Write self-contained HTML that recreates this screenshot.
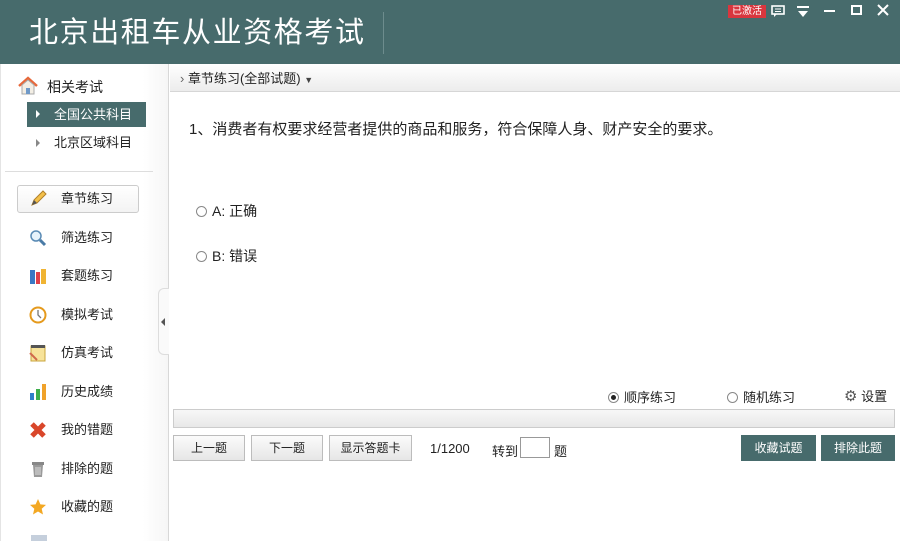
<!DOCTYPE html>
<html><head><meta charset="utf-8"><style>
*{margin:0;padding:0;box-sizing:border-box}
body{width:900px;height:541px;overflow:hidden;background:#fff;font-family:"Liberation Sans","Noto Sans CJK SC",sans-serif;position:relative;color:#222}
.hdr{position:absolute;left:0;top:0;width:900px;height:64px;background:#476b6c}
.title{position:absolute;left:29px;top:13px;font-size:29px;color:#fff;letter-spacing:1.6px;line-height:40px}
.vsep{position:absolute;left:383px;top:12px;width:1px;height:42px;background:#6d8c8d}
.badge{position:absolute;left:728px;top:5px;width:38px;height:13px;background:#d9363e;color:#fff;font-size:10px;line-height:13px;text-align:center}
.side{position:absolute;left:0;top:64px;width:169px;height:477px;border-right:1px solid #d8d8d8;border-left:1px solid #e4e4e4;background:linear-gradient(to right,#fff 85%,#f6f6f6)}
.abs{position:absolute}
.item{position:absolute;left:16px;width:122px;height:28px;font-size:13px;line-height:28px;padding-left:44px;color:#222}
.ic{position:absolute;left:12px;top:5px;width:18px;height:18px}
.bar{position:absolute;left:170px;top:64px;width:730px;height:28px;background:linear-gradient(#fff,#ececec);border-bottom:1px solid #d6d6d6;font-size:13px;line-height:30px;padding-left:10px}
.btn{position:absolute;top:435px;height:26px;border:1px solid #bcbcbc;background:linear-gradient(#fbfbfb,#e6e6e6);font-size:12px;line-height:24px;text-align:center}
.gbtn{position:absolute;top:435px;height:26px;background:#476b6c;color:#fff;font-size:12px;line-height:26px;text-align:center}
.radio{display:inline-block;width:11px;height:11px;border:1px solid #888;border-radius:50%;vertical-align:-1px;margin-right:5px;position:relative}
</style></head><body>
<div class="hdr">
<div class="title">北京出租车从业资格考试</div>
<div class="vsep"></div>
<div class="badge">已激活</div>
<svg class="abs" style="left:771px;top:5px" width="14" height="13"><rect x="1" y="1" width="12" height="8" fill="none" stroke="#fff" stroke-width="1.6"/><path d="M4 4h6M4 6.5h6" stroke="#fff"/><path d="M3 9v3l3-3" fill="#fff"/></svg>
<svg class="abs" style="left:796px;top:6px" width="14" height="12"><path d="M1 1h12" stroke="#fff" stroke-width="2"/><path d="M2 5h10l-5 6z" fill="#fff"/></svg>
<div class="abs" style="left:824px;top:10px;width:11px;height:2px;background:#fff"></div>
<div class="abs" style="left:851px;top:5px;width:11px;height:10px;border:2px solid #fff"></div>
<svg class="abs" style="left:877px;top:4px" width="12" height="12"><path d="M1 1L11 11M11 1L1 11" stroke="#fff" stroke-width="2"/></svg>
</div>
<div class="side">
<svg class="abs" style="left:16px;top:12px" width="22" height="20"><path d="M2 10L11 2l9 8" fill="none" stroke="#e7683a" stroke-width="2.5"/><path d="M5 9v9h12V9L11 4z" fill="#f3eee4" stroke="#aaa"/><rect x="9" y="12" width="4" height="6" fill="#6f99c8"/></svg>
<div class="abs" style="left:46px;top:13px;font-size:14px">相关考试</div>
<div class="abs" style="left:26px;top:38px;width:119px;height:25px;background:#476b6c;color:#fff;font-size:13px;line-height:25px;padding-left:27px">全国公共科目</div>
<div class="abs" style="left:35px;top:46px;width:0;height:0;border-left:4px solid #fff;border-top:4px solid transparent;border-bottom:4px solid transparent"></div>
<div class="abs" style="left:35px;top:75px;width:0;height:0;border-left:4px solid #888;border-top:4px solid transparent;border-bottom:4px solid transparent"></div>
<div class="abs" style="left:53px;top:67px;font-size:13px;line-height:24px">北京区域科目</div>
<div class="abs" style="left:4px;top:107px;width:148px;height:1px;background:#ddd"></div>
<div class="item" style="top:121px;border:1px solid #ccc;border-radius:3px;background:linear-gradient(#fff,#f3f3f3);padding-left:43px;line-height:26px">
<svg class="ic" style="left:11px;top:3px" width="18" height="18"><path d="M3 16l2-5 9-9 3 3-9 9z" fill="#f3c04a" stroke="#b0802a"/><path d="M3 16l2-5 3 3z" fill="#555"/></svg>章节练习</div>
<div class="item" style="top:160px"><svg class="ic" width="18" height="18"><circle cx="7" cy="7" r="5" fill="#e6f2fb" stroke="#5a8bb5" stroke-width="1.5"/><path d="M11 11l5 5" stroke="#4a7ba6" stroke-width="3"/></svg>筛选练习</div>
<div class="item" style="top:198px"><svg class="ic" width="18" height="18"><rect x="1" y="3" width="5" height="14" fill="#3a78c4"/><rect x="7" y="5" width="4" height="12" fill="#e0404a"/><rect x="12" y="2" width="5" height="15" fill="#f0b432"/></svg>套题练习</div>
<div class="item" style="top:237px"><svg class="ic" width="18" height="18"><circle cx="9" cy="9" r="7.5" fill="#fff" stroke="#e59a1d" stroke-width="2"/><path d="M9 4v5l3 3" fill="none" stroke="#777" stroke-width="1.3"/></svg>模拟考试</div>
<div class="item" style="top:275px"><svg class="ic" width="18" height="18"><rect x="2" y="2" width="14" height="15" fill="#f7e39a" stroke="#c9a53d"/><rect x="2" y="1" width="14" height="3" fill="#555"/><path d="M1 9l7 7" stroke="#d06a4a" stroke-width="2"/></svg>仿真考试</div>
<div class="item" style="top:314px"><svg class="ic" width="18" height="18"><rect x="1" y="10" width="4" height="7" fill="#2f7fc8"/><rect x="7" y="6" width="4" height="11" fill="#3cae4a"/><rect x="13" y="1" width="4" height="16" fill="#f0a22a"/></svg>历史成绩</div>
<div class="item" style="top:352px"><svg class="ic" width="18" height="18"><path d="M3 3L15 15M15 3L3 15" stroke="#d9462a" stroke-width="5"/></svg>我的错题</div>
<div class="item" style="top:391px"><svg class="ic" width="18" height="18"><rect x="3" y="2" width="12" height="3" fill="#888"/><path d="M4 5h10l-1 12H5z" fill="#9a9a9a"/><path d="M7 7v8M9 7v8M11 7v8" stroke="#ddd"/></svg>排除的题</div>
<div class="item" style="top:429px"><svg class="ic" width="18" height="18"><path d="M9 1l2.4 5.4 5.6.5-4.3 3.8 1.3 5.8L9 13.5 4 16.5l1.3-5.8L1 6.9l5.6-.5z" fill="#f3a823"/></svg>收藏的题</div>
<div class="abs" style="left:30px;top:471px;width:16px;height:6px;background:#c5cfdc"></div>
</div>
<div class="abs" style="left:158px;top:288px;width:11px;height:67px;border:1px solid #ddd;border-right:none;border-radius:6px 0 0 6px;background:#fafafa"></div>
<div class="abs" style="left:161px;top:318px;width:0;height:0;border-right:4px solid #555;border-top:4px solid transparent;border-bottom:4px solid transparent"></div>
<div class="bar"><span style="color:#666">›</span> 章节练习(全部试题) <span style="font-size:9px;color:#444">▼</span></div>
<div class="abs" style="left:189px;top:118px;font-size:15px">1、消费者有权要求经营者提供的商品和服务，符合保障人身、财产安全的要求。</div>
<div class="abs" style="left:196px;top:201px;font-size:14px"><span class="radio"></span>A: 正确</div>
<div class="abs" style="left:196px;top:246px;font-size:14px"><span class="radio"></span>B: 错误</div>
<div class="abs" style="left:608px;top:387px;font-size:13px"><span class="radio"><span style="position:absolute;left:2px;top:2px;width:5px;height:5px;border-radius:50%;background:#222"></span></span>顺序练习</div>
<div class="abs" style="left:727px;top:387px;font-size:13px"><span class="radio"></span>随机练习</div>
<div class="abs" style="left:844px;top:386px;font-size:13px"><span style="font-size:15px;color:#555">⚙</span> 设置</div>
<div class="abs" style="left:173px;top:409px;width:722px;height:19px;border:1px solid #ccc;background:linear-gradient(#f7f7f7,#e8e8e8)"></div>
<div class="btn" style="left:173px;width:72px">上一题</div>
<div class="btn" style="left:251px;width:72px">下一题</div>
<div class="btn" style="left:329px;width:83px">显示答题卡</div>
<div class="abs" style="left:430px;top:441px;font-size:13px">1/1200</div>
<div class="abs" style="left:492px;top:441px;font-size:13px">转到</div>
<div class="abs" style="left:520px;top:437px;width:30px;height:21px;border:1px solid #999;background:#fff"></div>
<div class="abs" style="left:554px;top:441px;font-size:13px">题</div>
<div class="gbtn" style="left:741px;width:75px">收藏试题</div>
<div class="gbtn" style="left:821px;width:74px">排除此题</div>
</body></html>
